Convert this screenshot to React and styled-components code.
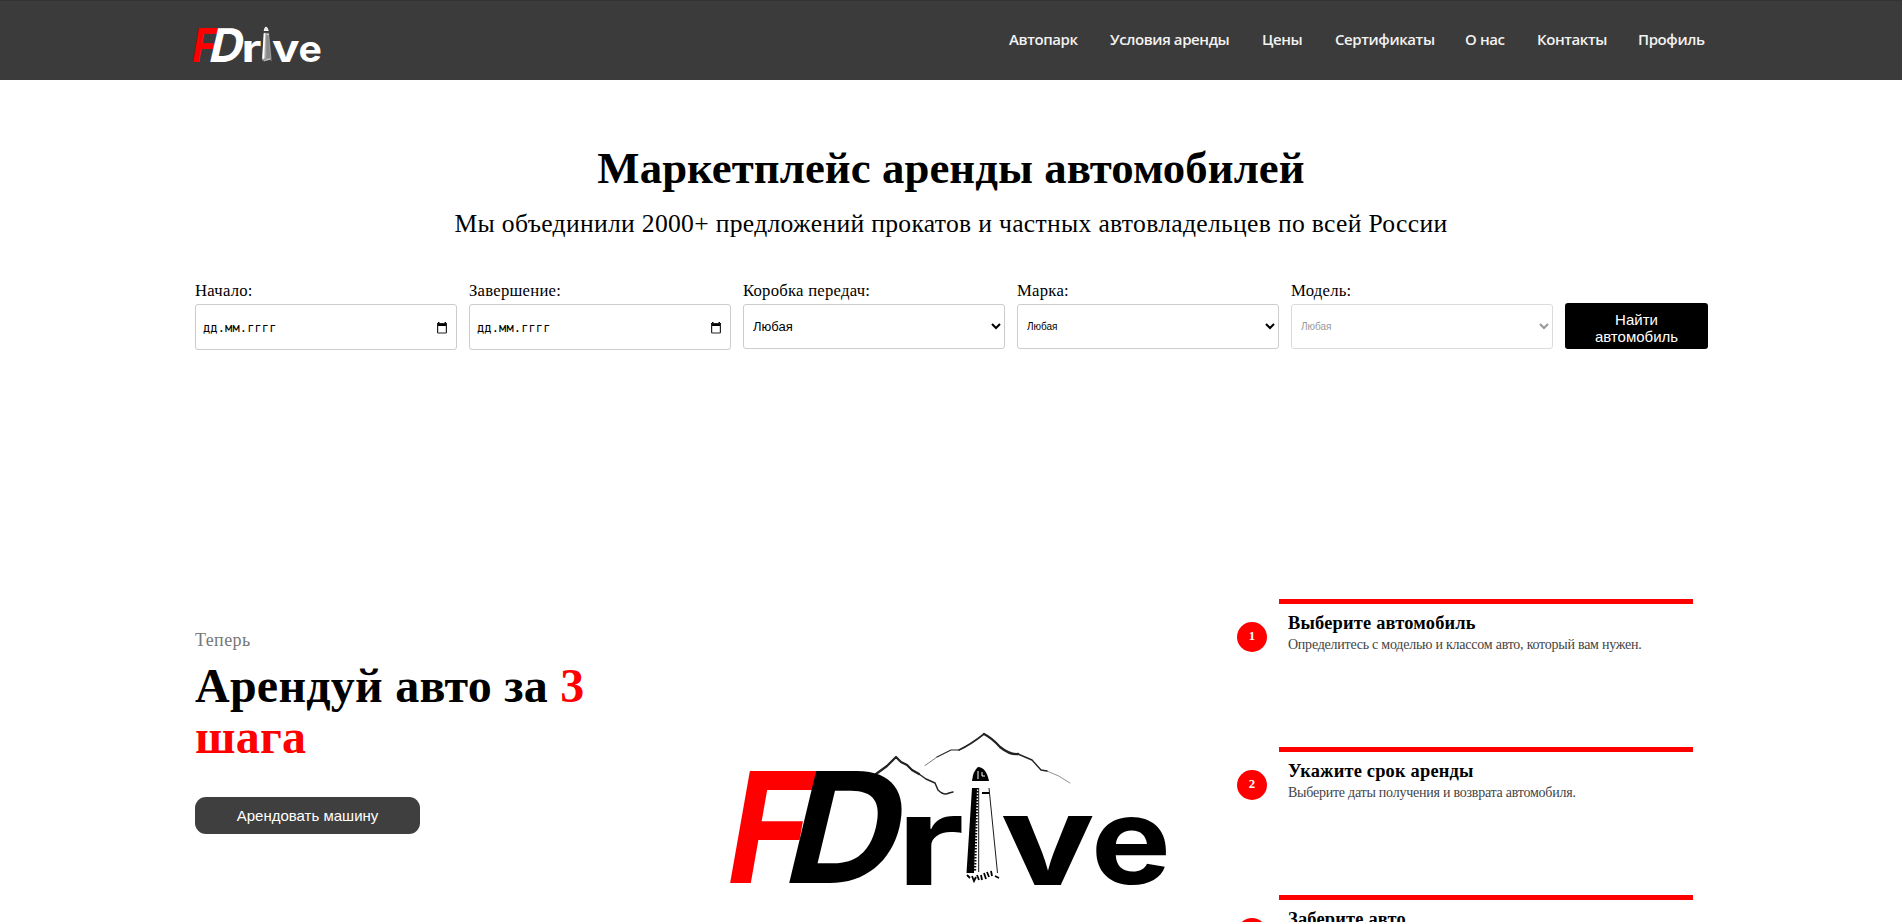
import React from 'react';
import styled, { createGlobalStyle } from 'styled-components';

const GlobalStyle = createGlobalStyle`
  * { box-sizing: border-box; }
  html, body { margin: 0; padding: 0; background: #fff; overflow: hidden; }
  body { height: 922px; font-family: "Liberation Serif", "Times New Roman", serif; color: #000; }
  h1, h2, h3, p { margin: 0; }
`;

const Header = styled.header`
  height: 80px;
  background: #3b3b3b;
  border-top: 1px solid #333;
  padding: 0 196px 0 193px;
  display: flex;
  justify-content: space-between;
`;

const LogoLink = styled.a`
  display: block;
  padding-top: 14px;
`;

const Nav = styled.nav`
  display: flex;
  gap: 31px;
  padding-top: 27px;
`;

const NavLink = styled.a`
  font: 650 15px/22px "Open Sans", "Noto Sans", sans-serif;
  letter-spacing: -0.4px;
  color: #f2f2f2;
  white-space: nowrap;
  width: ${(p) => p.$w}px;
`;

const Hero = styled.section`
  padding-top: 60px;
  text-align: center;
`;

const HeroTitle = styled.h1`
  font-size: 44.8px;
  line-height: 56px;
  letter-spacing: 0.06px;
  white-space: nowrap;
`;

const HeroText = styled.p`
  margin-top: 13px;
  font-size: 25.6px;
  line-height: 30px;
  letter-spacing: 0.32px;
  white-space: nowrap;
`;

const SearchForm = styled.form`
  display: grid;
  grid-template-columns: repeat(5, 262px) 143px;
  column-gap: 12px;
  margin: 42px 0 0 195px;
  height: 69px;
`;

const Field = styled.label`
  display: flex;
  flex-direction: column;
`;

const FieldLabel = styled.span`
  font-size: 16.7px;
  line-height: 20px;
  letter-spacing: 0.24px;
  margin-bottom: 3px;
`;

const DateBox = styled.span`
  height: 46px;
  border: 1px solid #ccc;
  border-radius: 3px;
  display: flex;
  align-items: center;
  justify-content: space-between;
  padding: 1px 9px 0 7px;
  font: 12px/16px "DejaVu Sans Mono", monospace;
  letter-spacing: 0.13px;
`;

const Select = styled.select`
  height: 45px;
  width: 100%;
  border: 1px solid #ccc;
  border-radius: 3px;
  background: #fff;
  padding: 0 1px 0 5px;
  color: #000;
  font: ${(p) => p.$size}px "Liberation Sans", Arial, sans-serif;
  &:disabled { opacity: 0.7; color: #6d6d6d; }
`;

const SearchButton = styled.button`
  margin-top: 22px;
  height: 46px;
  border: 0;
  border-radius: 3px;
  background: #000;
  color: #fff;
  padding: 4px 20px 0;
  font: 15px/17px "Liberation Sans", Arial, sans-serif;
`;

const Steps = styled.section`
  display: flex;
  align-items: flex-start;
  margin: 249px 0 0 195px;
  height: 323px;
  overflow: hidden;
`;

const Promo = styled.div`
  width: 535px;
  padding-top: 31px;
`;

const PromoLead = styled.p`
  font-size: 18px;
  line-height: 20px;
  letter-spacing: 0.4px;
  color: #777;
`;

const PromoTitle = styled.h2`
  width: 420px;
  margin-top: 10px;
  font-size: 48px;
  line-height: 51px;
  letter-spacing: 0.25px;
`;

const Accent = styled.span`
  color: #f00;
`;

const RentButton = styled.button`
  width: 225px;
  height: 37px;
  margin-top: 35px;
  border: 0;
  border-radius: 11px;
  background: #3f3f3f;
  color: #fff;
  font: 15px/18px "Liberation Sans", Arial, sans-serif;
`;

const BigLogo = styled.div`
  width: 507px;
  padding-top: 129px;
`;

const StepList = styled.div`
  display: flex;
  flex-direction: column;
`;

const Step = styled.article`
  display: flex;
  height: 148px;
`;

const StepNumber = styled.span`
  width: 30px;
  height: 30px;
  margin: 23px 12px 0 0;
  border-radius: 50%;
  background: #f00;
  color: #fff;
  text-align: center;
  font-size: 12.8px;
  font-weight: 700;
  line-height: 28px;
`;

const StepBody = styled.div`
  width: 414px;
  border-top: 5px solid #f00;
  padding: 9px 0 0 9px;
`;

const StepTitle = styled.h3`
  font-size: 18.4px;
  line-height: 20px;
  letter-spacing: 0.2px;
  white-space: nowrap;
`;

const StepText = styled.p`
  margin-top: 3px;
  font-size: 14px;
  line-height: 17px;
  letter-spacing: -0.24px;
  color: #444;
  white-space: nowrap;
`;

const LogoSvg = styled.svg`
  display: block;
  overflow: visible;
  font-family: "Inter", sans-serif;
  font-weight: 700;
`;

const Mountains = () => (
  <g fill="none" stroke="#222" strokeLinecap="round" strokeLinejoin="round">
    <path strokeWidth="2.2" d="M146 46 L157 38 L166 29 L171 34 L177 37 L182 42 L189 46" />
    <path strokeWidth="1.5" d="M189 46 L196 51 L205 55 L208 62 Q214 68 219 65 L223 64" />
    <path strokeWidth="0.6" d="M195 37.500 L207 29" />
    <path strokeWidth="1.1" d="M207 29 L221 22 L229 22" />
    <path strokeWidth="1.6" d="M229 22 Q240 17 254 6" />
    <path strokeWidth="2.300" d="M254 6 Q262 10 270 19 Q280 27 288 26" />
    <path strokeWidth="1.4" d="M288 26 L302 32 L311 42 L317 43" />
    <path strokeWidth="0.5" d="M317 43 Q329 47 340 55" />
  </g>
);

const Lighthouse = ({ ink, body }) => (
  <g>
    <path fill={body} d="M242 59 L259 59 L268 148 L237 150 Z" />
    <path fill={ink} d="M242 53 Q243 43 248 39 Q256 39 259 53 Z" />
    <path fill="none" stroke={body} strokeWidth="1" d="M248 43 V51 M252 44 V48 H255" />
    <path fill={ink} d="M242 60 H247 L244 145 H236.500 Z M252 64 h7 v2 h-7 Z" />
    <path fill="none" stroke={ink} strokeWidth="2.200" strokeDasharray="1.500 1.500" d="M247.500 60 L245 144" />
    <path fill="none" stroke={ink} strokeWidth="0.900" d="M248.700 60 V144 M259 60 L267.500 145" />
    <path fill="none" stroke={ink} strokeWidth="1.800" d="M237 147 l3 3 M242 148 l2 5 l2 -4 M247 147 l2 5 M251 147 l1 5 M254 145 l2 6 M257 144 l2 5 M261 143 l1 5 M265 148 l4 2" />
  </g>
);

const Logo = ({ width, height, letters, body, scenery }) => (
  <LogoSvg width={width} height={height} viewBox="0 0 438 160" preserveAspectRatio="none">
    {scenery && <Mountains />}
    <text fill="#f00" fontSize="154" transform="translate(-1 155) skewX(-10) scale(.9 1)" x="-9" y="0">F</text>
    <text fill={letters} fontSize="154" transform="translate(58 155) skewX(-13.5) scale(1.03 1)" x="-9" y="0">D</text>
    <text fill={letters} fontSize="125" transform="translate(175.5 156.5) scale(1.34 1)" x="-7" y="0">r</text>
    <Lighthouse ink={letters} body={body} />
    <text fill={letters} fontSize="127" transform="translate(273 156.5) scale(1.24 1)" x="-2" y="0">v</text>
    <text fill={letters} fontSize="122" transform="translate(366.5 155.5) scale(1.1 1)" x="-5" y="0">e</text>
  </LogoSvg>
);

const CalendarIcon = () => (
  <svg width="10" height="12" viewBox="0 0 10 12">
    <path d="M0 1h1V0h1.5v1h5V0H9v1h1v3H0z" fill="#000" />
    <rect x=".6" y="1.6" width="8.8" height="9.4" rx=".8" fill="none" stroke="#222" strokeWidth="1.2" />
  </svg>
);

const links = [
  ['Автопарк', 70], ['Условия аренды', 121], ['Цены', 42], ['Сертификаты', 99],
  ['О нас', 41], ['Контакты', 70], ['Профиль', 68],
];

const steps = [
  ['Выберите автомобиль', 'Определитесь с моделью и классом авто, который вам нужен.'],
  ['Укажите срок аренды', 'Выберите даты получения и возврата автомобиля.'],
  ['Заберите авто', ''],
];

const DateField = ({ label }) => (
  <Field>
    <FieldLabel>{label}</FieldLabel>
    <DateBox>дд.мм.гггг<CalendarIcon /></DateBox>
  </Field>
);

const SelectField = ({ label, size, disabled }) => (
  <Field>
    <FieldLabel>{label}</FieldLabel>
    <Select $size={size} disabled={disabled}><option>Любая</option></Select>
  </Field>
);

export default function App() {
  return (
    <>
      <GlobalStyle />
      <Header>
        <LogoLink><Logo width={128} height={48.4} letters="#fff" body="#8a8a8a" /></LogoLink>
        <Nav>{links.map(([t, w]) => <NavLink key={t} $w={w}>{t}</NavLink>)}</Nav>
      </Header>
      <Hero>
        <HeroTitle>Маркетплейс аренды автомобилей</HeroTitle>
        <HeroText>Мы объединили 2000+ предложений прокатов и частных автовладельцев по всей России</HeroText>
      </Hero>
      <SearchForm>
        <DateField label="Начало:" />
        <DateField label="Завершение:" />
        <SelectField label="Коробка передач:" size={13} />
        <SelectField label="Марка:" size={10} />
        <SelectField label="Модель:" size={10} disabled />
        <SearchButton type="button">Найти автомобиль</SearchButton>
      </SearchForm>
      <Steps>
        <Promo>
          <PromoLead>Теперь</PromoLead>
          <PromoTitle>Арендуй авто за <Accent>3 шага</Accent></PromoTitle>
          <RentButton>Арендовать машину</RentButton>
        </Promo>
        <BigLogo><Logo width={438} height={160} letters="#000" body="#fff" scenery /></BigLogo>
        <StepList>
          {steps.map(([t, d], i) => (
            <Step key={t}>
              <StepNumber>{i + 1}</StepNumber>
              <StepBody><StepTitle>{t}</StepTitle>{d && <StepText>{d}</StepText>}</StepBody>
            </Step>
          ))}
        </StepList>
      </Steps>
    </>
  );
}
